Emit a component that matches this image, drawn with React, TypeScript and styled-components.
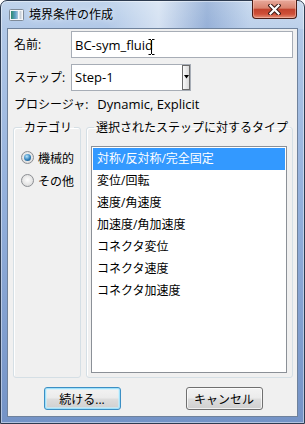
import React from 'react';
import styled, { createGlobalStyle } from 'styled-components';

const UI_FONT = `"Open Sans", "Noto Sans CJK JP", sans-serif`;

const GlobalStyle = createGlobalStyle`
  html, body {
    margin: 0;
    padding: 0;
    background: #ffffff;
  }
  * {
    box-sizing: border-box;
  }
`;

const Window = styled.div`
  width: 305px;
  height: 424px;
  display: flex;
  flex-direction: column;
  padding: 0 6px 6px;
  border: 1px solid #2d3b50;
  border-radius: 7px 7px 0 0;
  background:
    linear-gradient(90deg, rgba(255, 255, 255, 0) 35%, rgba(255, 255, 255, 0.45) 52%, rgba(70, 105, 170, 0.25) 68%, rgba(255, 255, 255, 0.15) 82%) top / 100% 28px no-repeat,
    linear-gradient(180deg, #c0d4ec 0px, #b1c8e7 28px, #93b0dc 200px, #7493c6 100%);
  box-shadow: inset 0 0 0 1px rgba(255, 255, 255, 0.45);
  font-family: ${UI_FONT};
  font-size: 12px;
  color: #000000;
`;

const TitleBar = styled.div`
  height: 27px;
  display: flex;
  align-items: center;
  padding-left: 2px;
  flex: none;
`;

const TitleText = styled.span`
  margin-left: 5px;
  line-height: 16px;
  text-shadow: 0 0 6px rgba(255, 255, 255, 0.9);
`;

const CloseButton = styled.div`
  align-self: flex-start;
  margin: -1px 1px 0 auto;
  width: 45px;
  height: 19px;
  border: 1px solid #4a1d17;
  border-top: 0;
  border-radius: 0 0 4px 4px;
  background: linear-gradient(180deg, #e8a99b 0%, #d9836f 45%, #c2432e 52%, #cf4f38 78%, #e39179 100%);
  box-shadow: inset 0 0 0 1px rgba(255, 210, 200, 0.45);
  display: flex;
  align-items: center;
  justify-content: center;
`;

const Client = styled.div`
  flex: 1;
  display: flex;
  flex-direction: column;
  padding: 2px 4px 6px 5px;
  border: 1px solid #6f829c;
  background: #f0f0f0;
`;

const FieldRow = styled.div<{ $gap?: number }>`
  display: flex;
  align-items: center;
  padding-left: 1px;
  margin-top: ${(p) => p.$gap ?? 0}px;
`;

const Label = styled.span`
  width: 57px;
  flex: none;
  line-height: 16px;
`;

const FieldWrap = styled.div`
  position: relative;
  flex: 1;
`;

const TextInput = styled.input`
  display: block;
  width: 100%;
  height: 27px;
  margin: 0;
  padding: 0 3px;
  border: 1px solid #a7adb6;
  background: #ffffff;
  font-family: ${UI_FONT};
  font-size: 13px;
  color: #000000;
  outline: none;
`;

const IBeam = styled.svg`
  position: absolute;
  left: 77px;
  top: 8px;
`;

const Combo = styled.div`
  width: 120px;
  height: 27px;
  display: flex;
  align-items: stretch;
  border: 1px solid #a7adb6;
  background: #ffffff;
`;

const ComboValue = styled.span`
  flex: 1;
  padding-left: 3px;
  font-size: 13px;
  line-height: 25px;
`;

const ComboButton = styled.div`
  width: 8px;
  border: 1px solid #6b6b6b;
  background: linear-gradient(90deg, #fafafa, #dadada);
  display: flex;
  justify-content: flex-end;
  padding-top: 9px;
`;

const ProcRow = styled.div`
  height: 22px;
  margin-top: 2px;
  padding-left: 1px;
  display: flex;
  align-items: center;
`;

const ProcValue = styled.span`
  margin-left: 9px;
  font-size: 13px;
`;

const Groups = styled.div`
  height: 259px;
  margin-top: 4px;
  display: flex;
  gap: 5px;
`;

const Group = styled.fieldset<{ $width?: number }>`
  margin: 0;
  min-width: 0;
  ${(p) => (p.$width ? `width: ${p.$width}px; flex: none;` : 'flex: 1;')}
  border: 1px solid #d5dfe5;
  border-radius: 3px;
  box-shadow: inset 1px 1px 0 #ffffff;
  display: flex;
  flex-direction: column;
`;

const CategoryGroup = styled(Group)`
  padding: 10px 0 0 7px;
`;

const TypeGroup = styled(Group)`
  padding: 10px 5px 4px 4px;
`;

const Legend = styled.legend<{ $indent: number }>`
  margin-left: ${(p) => p.$indent}px;
  padding: 0 2px;
  line-height: 17px;
  font-size: 12px;
  white-space: nowrap;
`;

const RadioRow = styled.label`
  height: 23px;
  display: flex;
  align-items: center;
  gap: 4px;
`;

const Radio = styled.span<{ $checked?: boolean }>`
  width: 13px;
  height: 13px;
  flex: none;
  border-radius: 50%;
  border: 1px solid #8c8f94;
  background: radial-gradient(circle at 50% 45%, #fdfdfd 0%, #e6e6e6 55%, #cfcfcf 100%);
  display: flex;
  align-items: center;
  justify-content: center;

  &::after {
    content: '';
    display: ${(p) => (p.$checked ? 'block' : 'none')};
    width: 7px;
    height: 7px;
    border-radius: 50%;
    background: radial-gradient(circle at 40% 35%, #b9e6fc 0%, #2f7fba 55%, #17466f 100%);
  }
`;

const ListBox = styled.ul`
  flex: 1;
  margin: 0;
  padding: 1px;
  list-style: none;
  border: 1px solid #8b9097;
  background: #ffffff;
`;

const ListItem = styled.li<{ $selected?: boolean }>`
  height: 22px;
  line-height: 22px;
  padding-left: 4px;
  background: ${(p) => (p.$selected ? '#3399ff' : 'transparent')};
  color: ${(p) => (p.$selected ? '#ffffff' : '#000000')};
`;

const Footer = styled.div`
  margin-top: 9px;
  display: flex;
  justify-content: center;
  gap: 65px;
`;

const Button = styled.button<{ $default?: boolean }>`
  width: 77px;
  height: 23px;
  padding: 0;
  border: 1px solid ${(p) => (p.$default ? '#3c8fc4' : '#707070')};
  border-radius: 3px;
  background: linear-gradient(180deg, #f3f3f3 0%, #ebebeb 48%, #dddddd 52%, #cfcfcf 100%);
  box-shadow: ${(p) => (p.$default ? 'inset 0 0 0 1px #9fe1fb, inset 0 0 0 2px rgba(200, 240, 255, 0.6)' : 'inset 0 0 0 1px rgba(255, 255, 255, 0.7)')};
  font-family: ${UI_FONT};
  font-size: 12px;
  color: #000000;
`;

const types = [
  '対称/反対称/完全固定',
  '変位/回転',
  '速度/角速度',
  '加速度/角加速度',
  'コネクタ変位',
  'コネクタ速度',
  'コネクタ加速度',
];

function WindowIcon() {
  return (
    <svg width="15" height="12" viewBox="0 0 15 12">
      <defs>
        <linearGradient id="wi" x1="0" y1="0" x2="1" y2="0">
          <stop offset="0" stopColor="#2e8b6c" />
          <stop offset="0.6" stopColor="#5c9fc4" />
          <stop offset="1" stopColor="#a9c8dc" />
        </linearGradient>
      </defs>
      <rect x="0.5" y="0.5" width="14" height="11" rx="1" fill="#f4f6f8" stroke="#7f8b99" />
      <rect x="2" y="2" width="7" height="8" fill="url(#wi)" />
      <rect x="10.5" y="2" width="2" height="8" fill="#c9d1da" />
    </svg>
  );
}

export default function App() {
  return (
    <>
      <GlobalStyle />
      <Window>
        <TitleBar>
          <WindowIcon />
          <TitleText>境界条件の作成</TitleText>
          <CloseButton>
            <svg width="13" height="11" viewBox="0 0 13 11">
              <path d="M2.5 1.5 L10.5 9.5 M10.5 1.5 L2.5 9.5" stroke="#3b1a16" strokeWidth="4.2" strokeLinecap="square" />
              <path d="M2.5 1.5 L10.5 9.5 M10.5 1.5 L2.5 9.5" stroke="#ffffff" strokeWidth="2.2" strokeLinecap="square" />
            </svg>
          </CloseButton>
        </TitleBar>

        <Client>
          <FieldRow>
            <Label>名前:</Label>
            <FieldWrap>
              <TextInput readOnly value="BC-sym_fluid" />
              <IBeam width="7" height="16" viewBox="0 0 7 16">
                <path d="M0.5 0.5 H3 M4 0.5 H6.5 M3.5 1 V15 M0.5 15.5 H3 M4 15.5 H6.5" stroke="#000000" strokeWidth="1" fill="none" />
              </IBeam>
            </FieldWrap>
          </FieldRow>

          <FieldRow $gap={6}>
            <Label>ステップ:</Label>
            <Combo>
              <ComboValue>Step-1</ComboValue>
              <ComboButton>
                <svg width="5" height="4" viewBox="0 0 5 4">
                  <path d="M0 0 H5 L2.5 3.5 Z" fill="#000000" />
                </svg>
              </ComboButton>
            </Combo>
          </FieldRow>

          <ProcRow>
            <span>プロシージャ:</span>
            <ProcValue>Dynamic, Explicit</ProcValue>
          </ProcRow>

          <Groups>
            <CategoryGroup $width={68}>
              <Legend $indent={1}>カテゴリ</Legend>
              <RadioRow>
                <Radio $checked />
                機械的
              </RadioRow>
              <RadioRow>
                <Radio />
                その他
              </RadioRow>
            </CategoryGroup>

            <TypeGroup>
              <Legend $indent={3}>選択されたステップに対するタイプ</Legend>
              <ListBox>
                {types.map((t, i) => (
                  <ListItem key={t} $selected={i === 0}>
                    {t}
                  </ListItem>
                ))}
              </ListBox>
            </TypeGroup>
          </Groups>

          <Footer>
            <Button $default>続ける...</Button>
            <Button>キャンセル</Button>
          </Footer>
        </Client>
      </Window>
    </>
  );
}
